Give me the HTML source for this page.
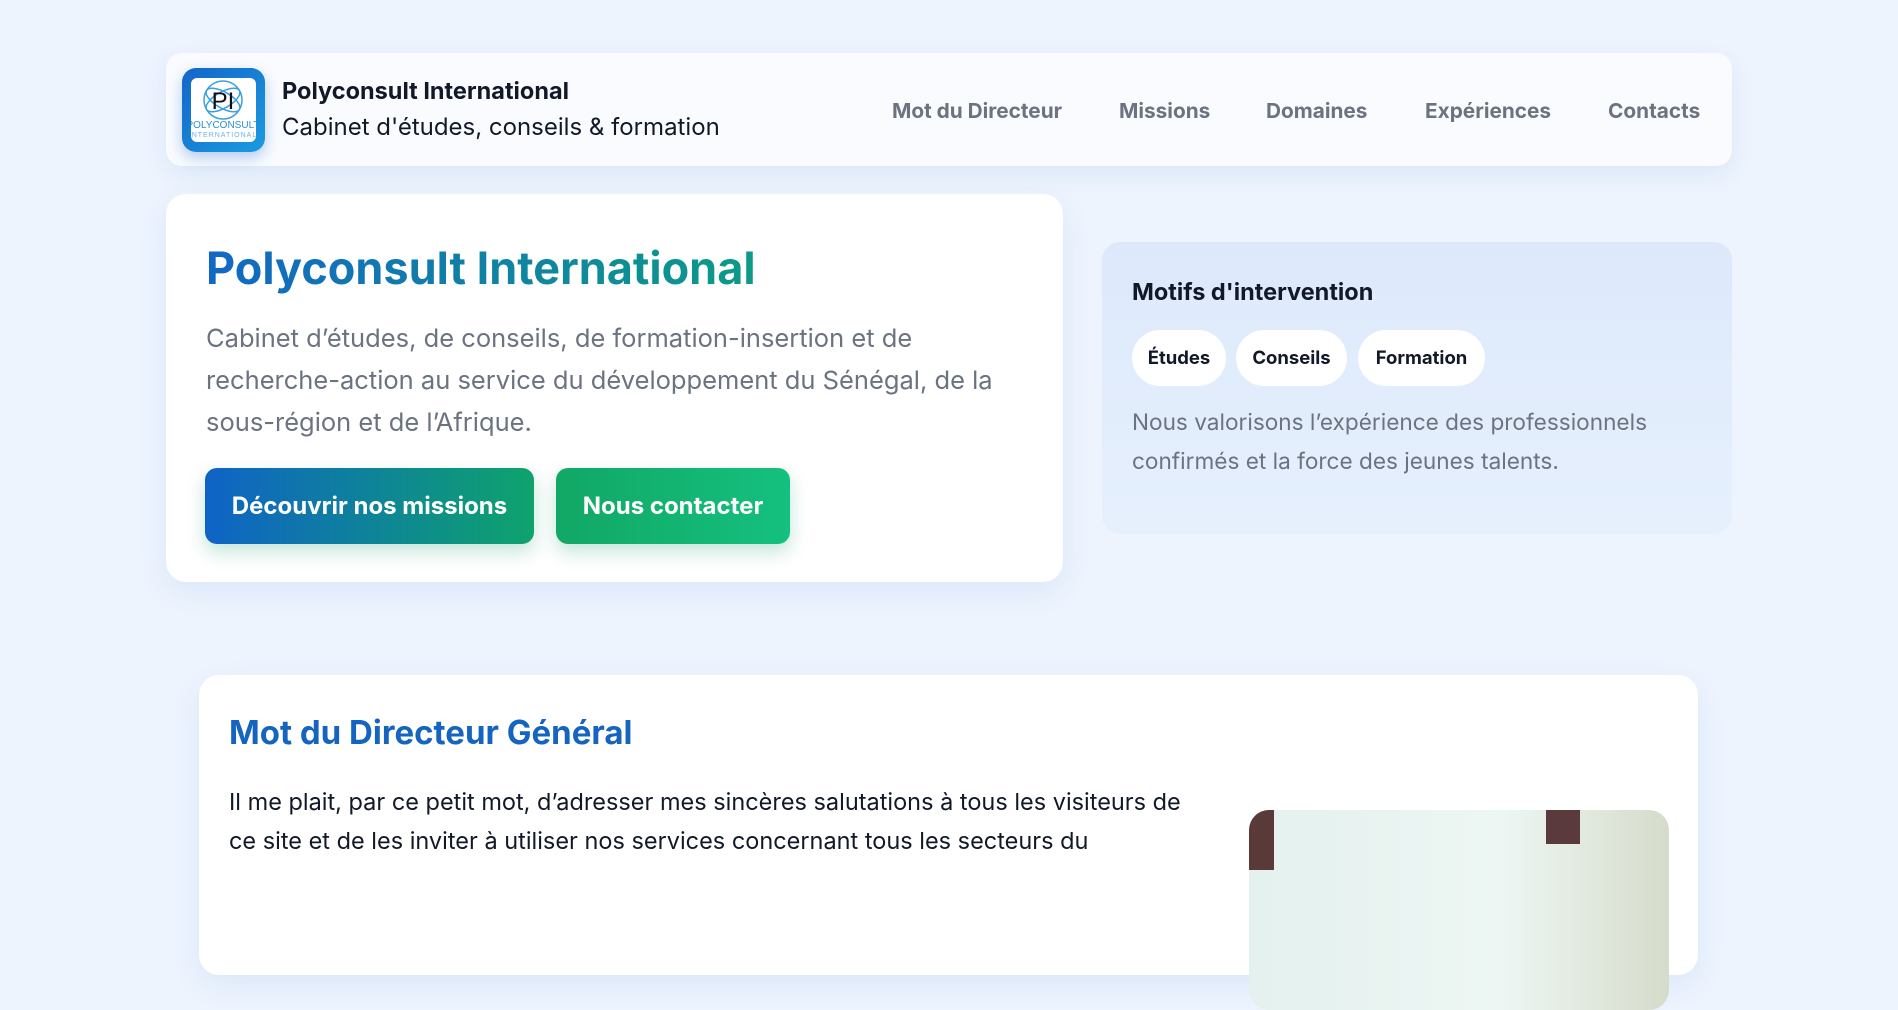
<!DOCTYPE html>
<html><head><meta charset="utf-8"><style>
*{box-sizing:border-box;margin:0;padding:0}
body{width:1898px;height:867px;overflow:hidden;background:#edf4fe;font-family:"Inter","Liberation Sans",sans-serif;position:relative}
.hdr{position:absolute;left:166px;top:53px;width:1566px;height:113px;background:#f9fbff;border-radius:16px;box-shadow:0 8px 24px rgba(30,80,160,.08)}
.logo{position:absolute;left:16px;top:15px;width:83px;height:84px;border-radius:14px;background:linear-gradient(135deg,#1466c8,#1a9be0);box-shadow:0 6px 14px rgba(20,100,200,.3)}
.logo .in{position:absolute;left:9px;top:10px;width:65px;height:64px;background:#fff;border-radius:6px;overflow:hidden}
.brand{position:absolute;left:116px;top:23px}
.brand b{display:block;font-size:23.5px;color:#111827}
.brand span{display:block;font-size:24px;color:#111827;margin-top:7px}
.nav a{position:absolute;top:46px;font-size:20.8px;font-weight:bold;color:#6b7280;text-decoration:none}
.hero{position:absolute;left:166px;top:194px;width:897px;height:388px;background:#fff;border-radius:20px;box-shadow:0 10px 30px rgba(30,80,160,.08)}
.hero h1{position:absolute;left:40px;top:46px;font-size:45px;font-weight:bold;background:linear-gradient(90deg,#1368c4,#0d9a86);-webkit-background-clip:text;color:transparent;white-space:nowrap}
.hero p{position:absolute;left:40px;top:124px;width:790px;font-size:25.5px;line-height:42px;color:#6b7280}
.btn{position:absolute;top:274px;height:76px;border-radius:12px;color:#fff;font-weight:bold;font-size:24px;line-height:76px;text-align:center;box-shadow:0 8px 18px rgba(16,150,110,.25)}
.side{position:absolute;left:1102px;top:242px;width:630px;height:292px;border-radius:18px;background:linear-gradient(180deg,#dde9fb,#e6f0fd)}
.side h3{position:absolute;left:30px;top:35px;font-size:23.5px;color:#111827}
.pill{position:absolute;top:88px;height:56px;border-radius:28px;background:#fff;font-weight:bold;font-size:18.5px;line-height:56px;text-align:center;color:#111827}
.side p{position:absolute;left:30px;top:161px;width:560px;font-size:22.6px;line-height:39px;color:#6b7280}
.sec{position:absolute;left:199px;top:675px;width:1499px;height:300px;background:#fff;border-radius:20px;box-shadow:0 10px 30px rgba(30,80,160,.08)}
.sec h2{position:absolute;left:30px;top:37px;font-size:33px;color:#1565c0}
.sec p{position:absolute;left:30px;top:107px;width:975px;font-size:23.5px;line-height:39px;color:#111827}
.img{position:absolute;left:1050px;top:135px;width:420px;height:200px;border-radius:20px;background:linear-gradient(90deg,#e4f1ef,#edf6f3 60%,#d6dccb);overflow:hidden}
</style></head><body>
<div class="hdr">
 <div class="logo"><div class="in">
  <svg width="65" height="64" viewBox="0 0 65 64"><g fill="none" stroke="#3aa0e0" stroke-width="1.5"><ellipse cx="32" cy="22" rx="19" ry="19"/><ellipse cx="32" cy="22" rx="19" ry="8" transform="rotate(30 32 22)"/><ellipse cx="32" cy="22" rx="19" ry="8" transform="rotate(-30 32 22)"/></g>
  <text x="32" y="31" font-size="24" text-anchor="middle" font-family="Liberation Sans" fill="#111">PI</text>
  <text x="32" y="50" font-size="10" text-anchor="middle" font-family="Liberation Sans" fill="#2a8ed8">POLYCONSULT</text>
  <text x="32" y="59" font-size="7" text-anchor="middle" font-family="Liberation Sans" fill="#6ab4e8" letter-spacing="1">INTERNATIONAL</text></svg>
 </div></div>
 <div class="brand"><b>Polyconsult International</b><span>Cabinet d'études, conseils &amp; formation</span></div>
 <div class="nav"><a style="left:726px">Mot du Directeur</a><a style="left:953px">Missions</a><a style="left:1100px">Domaines</a><a style="left:1259px">Expériences</a><a style="left:1442px">Contacts</a></div>
</div>
<div class="hero">
 <h1>Polyconsult International</h1>
 <p>Cabinet d’études, de conseils, de formation-insertion et de recherche-action au service du développement du Sénégal, de la sous-région et de l’Afrique.</p>
 <div class="btn" style="left:39px;width:329px;background:linear-gradient(90deg,#0f63c6,#0ea36c)">Découvrir nos missions</div>
 <div class="btn" style="left:390px;width:234px;background:linear-gradient(90deg,#12a765,#14c07f)">Nous contacter</div>
</div>
<div class="side">
 <h3>Motifs d'intervention</h3>
 <div class="pill" style="left:30px;width:94px">Études</div>
 <div class="pill" style="left:134px;width:111px">Conseils</div>
 <div class="pill" style="left:256px;width:127px">Formation</div>
 <p>Nous valorisons l’expérience des professionnels confirmés et la force des jeunes talents.</p>
</div>
<div class="sec">
 <h2>Mot du Directeur Général</h2>
 <p>Il me plait, par ce petit mot, d’adresser mes sincères salutations à tous les visiteurs de ce site et de les inviter à utiliser nos services concernant tous les secteurs du</p>
 <div class="img"><div style="position:absolute;left:0;top:0;width:25px;height:60px;background:#5a3a38"></div><div style="position:absolute;left:297px;top:0;width:34px;height:34px;background:#5a3a3c"></div></div>
</div>
</body></html>
